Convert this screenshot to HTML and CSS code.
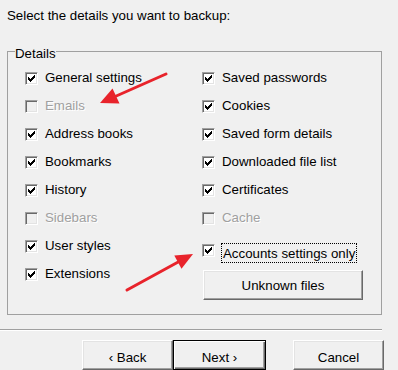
FILE: index.html
```html
<!DOCTYPE html>
<html>
<head>
<meta charset="utf-8">
<link rel="stylesheet" href="styles.css">
</head>
<body>
<div class="dialog">
  <p class="intro">Select the details you want to backup:</p>
  <fieldset class="group">
    <legend class="legend">Details</legend>
    <div class="cols">
      <div class="col">
        <div class="item"><span class="box"><svg class="tick" viewBox="0 0 11 11"><path d="M8 2h1v1h-1zM7 3h2v1h-2zM2 4h1v1h-1zM6 4h3v1h-3zM2 5h2v1h-2zM5 5h3v1h-3zM2 6h5v1h-5zM3 7h3v1h-3zM4 8h1v1h-1z"/></svg></span><span class="label">General settings</span></div>
        <div class="item off"><span class="box"></span><span class="label">Emails</span></div>
        <div class="item"><span class="box"><svg class="tick" viewBox="0 0 11 11"><path d="M8 2h1v1h-1zM7 3h2v1h-2zM2 4h1v1h-1zM6 4h3v1h-3zM2 5h2v1h-2zM5 5h3v1h-3zM2 6h5v1h-5zM3 7h3v1h-3zM4 8h1v1h-1z"/></svg></span><span class="label">Address books</span></div>
        <div class="item"><span class="box"><svg class="tick" viewBox="0 0 11 11"><path d="M8 2h1v1h-1zM7 3h2v1h-2zM2 4h1v1h-1zM6 4h3v1h-3zM2 5h2v1h-2zM5 5h3v1h-3zM2 6h5v1h-5zM3 7h3v1h-3zM4 8h1v1h-1z"/></svg></span><span class="label">Bookmarks</span></div>
        <div class="item"><span class="box"><svg class="tick" viewBox="0 0 11 11"><path d="M8 2h1v1h-1zM7 3h2v1h-2zM2 4h1v1h-1zM6 4h3v1h-3zM2 5h2v1h-2zM5 5h3v1h-3zM2 6h5v1h-5zM3 7h3v1h-3zM4 8h1v1h-1z"/></svg></span><span class="label">History</span></div>
        <div class="item off"><span class="box"></span><span class="label">Sidebars</span></div>
        <div class="item"><span class="box"><svg class="tick" viewBox="0 0 11 11"><path d="M8 2h1v1h-1zM7 3h2v1h-2zM2 4h1v1h-1zM6 4h3v1h-3zM2 5h2v1h-2zM5 5h3v1h-3zM2 6h5v1h-5zM3 7h3v1h-3zM4 8h1v1h-1z"/></svg></span><span class="label">User styles</span></div>
        <div class="item"><span class="box"><svg class="tick" viewBox="0 0 11 11"><path d="M8 2h1v1h-1zM7 3h2v1h-2zM2 4h1v1h-1zM6 4h3v1h-3zM2 5h2v1h-2zM5 5h3v1h-3zM2 6h5v1h-5zM3 7h3v1h-3zM4 8h1v1h-1z"/></svg></span><span class="label">Extensions</span></div>
      </div>
      <div class="col">
        <div class="item"><span class="box"><svg class="tick" viewBox="0 0 11 11"><path d="M8 2h1v1h-1zM7 3h2v1h-2zM2 4h1v1h-1zM6 4h3v1h-3zM2 5h2v1h-2zM5 5h3v1h-3zM2 6h5v1h-5zM3 7h3v1h-3zM4 8h1v1h-1z"/></svg></span><span class="label">Saved passwords</span></div>
        <div class="item"><span class="box"><svg class="tick" viewBox="0 0 11 11"><path d="M8 2h1v1h-1zM7 3h2v1h-2zM2 4h1v1h-1zM6 4h3v1h-3zM2 5h2v1h-2zM5 5h3v1h-3zM2 6h5v1h-5zM3 7h3v1h-3zM4 8h1v1h-1z"/></svg></span><span class="label">Cookies</span></div>
        <div class="item"><span class="box"><svg class="tick" viewBox="0 0 11 11"><path d="M8 2h1v1h-1zM7 3h2v1h-2zM2 4h1v1h-1zM6 4h3v1h-3zM2 5h2v1h-2zM5 5h3v1h-3zM2 6h5v1h-5zM3 7h3v1h-3zM4 8h1v1h-1z"/></svg></span><span class="label">Saved form details</span></div>
        <div class="item"><span class="box"><svg class="tick" viewBox="0 0 11 11"><path d="M8 2h1v1h-1zM7 3h2v1h-2zM2 4h1v1h-1zM6 4h3v1h-3zM2 5h2v1h-2zM5 5h3v1h-3zM2 6h5v1h-5zM3 7h3v1h-3zM4 8h1v1h-1z"/></svg></span><span class="label">Downloaded file list</span></div>
        <div class="item"><span class="box"><svg class="tick" viewBox="0 0 11 11"><path d="M8 2h1v1h-1zM7 3h2v1h-2zM2 4h1v1h-1zM6 4h3v1h-3zM2 5h2v1h-2zM5 5h3v1h-3zM2 6h5v1h-5zM3 7h3v1h-3zM4 8h1v1h-1z"/></svg></span><span class="label">Certificates</span></div>
        <div class="item off"><span class="box"></span><span class="label">Cache</span></div>
        <div class="item focus"><span class="box"><svg class="tick" viewBox="0 0 11 11"><path d="M8 2h1v1h-1zM7 3h2v1h-2zM2 4h1v1h-1zM6 4h3v1h-3zM2 5h2v1h-2zM5 5h3v1h-3zM2 6h5v1h-5zM3 7h3v1h-3zM4 8h1v1h-1z"/></svg></span><span class="label">Accounts settings only</span></div>
        <button class="btn unknown">Unknown files</button>
      </div>
    </div>
  </fieldset>
  <div class="sep"></div>
  <div class="buttons">
    <button class="btn back">&#8249; Back</button>
    <button class="btn next default">Next &#8250;</button>
    <button class="btn cancel">Cancel</button>
  </div>
  <svg class="arrows" width="398" height="370" viewBox="0 0 398 370">
    <line x1="166" y1="74" x2="114" y2="97" stroke="#e8232b" stroke-width="3" stroke-linecap="round"/>
    <polygon points="100,103 119.5,103.5 112.5,88.5" fill="#e8232b"/>
    <line x1="127" y1="290" x2="180" y2="261" stroke="#e8232b" stroke-width="3" stroke-linecap="round"/>
    <polygon points="193,254 181.5,268.8 174.3,255.5" fill="#e8232b"/>
  </svg>
</div>
</body>
</html>
```
FILE: styles.css
```css
html, body {
  margin: 0;
  padding: 0;
}
body {
  background: #f0f0f0;
  font-family: "Liberation Sans", Arial, sans-serif;
  font-size: 13.3px;
  color: #000;
  width: 398px;
  height: 370px;
  overflow: hidden;
}
.dialog {
  position: relative;
  width: 398px;
  height: 370px;
}
.intro {
  margin: 0;
  padding: 8px 0 0 7px;
  line-height: 15px;
}
.group {
  margin: 19px 16px 0 7px;
  padding: 3px 0 14px 7px;
  border: 1px solid #a0a0a0;
  min-width: 0;
}
.legend {
  padding: 4px 0 0 0;
  line-height: 15px;
}
.cols {
  display: grid;
  grid-template-columns: 177px 1fr;
  margin-left: 10px;
}
.col {
  display: flex;
  flex-direction: column;
  align-items: flex-start;
}
.item {
  display: flex;
  align-items: flex-start;
  height: 28px;
}
.box {
  box-sizing: border-box;
  width: 13px;
  height: 13px;
  margin-top: 8px;
  margin-right: 7px;
  background: #fff;
  border: 1px solid;
  border-color: #a0a0a0 #fff #fff #a0a0a0;
  box-shadow: inset 1px 1px 0 #696969, inset -1px -1px 0 #e3e3e3;
  display: block;
  flex: none;
}
.tick {
  display: block;
  width: 11px;
  height: 11px;
  fill: #000;
  shape-rendering: crispEdges;
}
.label {
  margin-top: 6px;
  line-height: 15px;
  white-space: nowrap;
}
.off .box {
  background: #f0f0f0;
}
.off .label {
  color: #a0a0a0;
  text-shadow: 1px 1px 0 #fff;
}
.focus {
  height: auto;
}
.focus .box {
  margin-top: 12px;
  margin-right: 6px;
}
.focus .label {
  margin-top: 11px;
  border: 1px dotted #000;
  padding: 2px 1px 0;
  line-height: 16px;
}
.btn {
  box-sizing: border-box;
  height: 30px;
  margin: 0;
  padding: 5px 0 0;
  background: #f0f0f0;
  font: inherit;
  color: #000;
  line-height: 15px;
  text-align: center;
  vertical-align: top;
  border: 1px solid;
  border-color: #fff #696969 #696969 #fff;
  box-shadow: inset -1px -1px 0 #a0a0a0, inset 1px 1px 0 #e3e3e3;
  border-radius: 0;
}
.unknown {
  width: 160px;
  margin: 7px 0 0 1px;
  padding-top: 0;
}
.sep {
  height: 1px;
  background: #a0a0a0;
  border-bottom: 1px solid #fff;
  margin: 14px 16px 0 0;
}
.buttons {
  display: flex;
  align-items: flex-start;
  padding-left: 82px;
  margin-top: 9px;
}
.back {
  width: 91px;
}
.next {
  width: 93px;
}
.default {
  border-color: #000;
  box-shadow: inset 1px 1px 0 #fff, inset -1px -1px 0 #696969, inset -2px -2px 0 #a0a0a0;
}
.cancel {
  width: 91px;
  margin-left: 27px;
}
.arrows {
  position: absolute;
  left: 0;
  top: 0;
  pointer-events: none;
}
```
